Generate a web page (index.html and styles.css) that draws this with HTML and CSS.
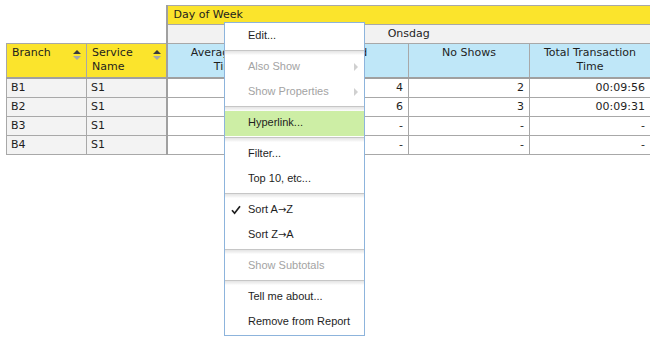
FILE: index.html
```html
<!DOCTYPE html>
<html lang="en">
<head>
<meta charset="UTF-8">
<title>Report grid</title>
<link rel="stylesheet" href="styles.css">
</head>
<body>
<div class="report">
  <table class="grid">
    <colgroup>
      <col class="c-dim"><col class="c-dim">
      <col class="c-val"><col class="c-val"><col class="c-val"><col class="c-val">
      <col class="c-more">
    </colgroup>
    <tr class="r-group">
      <th class="blank" colspan="2" rowspan="2"></th>
      <th class="group first" colspan="5">Day of Week</th>
    </tr>
    <tr class="r-day">
      <th class="day first" colspan="4">Onsdag</th>
      <th class="day"></th>
    </tr>
    <tr class="r-head">
      <th class="dim">Branch<span class="sort"></span></th>
      <th class="dim">Service Name<span class="sort"></span></th>
      <th class="measure first">Average Wait Time</th>
      <th class="measure">Served</th>
      <th class="measure">No Shows</th>
      <th class="measure">Total Transaction Time</th>
      <th class="measure"></th>
    </tr>
    <tr>
      <td class="key">B1</td><td class="key">S1</td>
      <td class="num first">00:01:12</td><td class="num">4</td><td class="num">2</td><td class="num">00:09:56</td><td class="num"></td>
    </tr>
    <tr>
      <td class="key">B2</td><td class="key">S1</td>
      <td class="num first">00:00:48</td><td class="num">6</td><td class="num">3</td><td class="num">00:09:31</td><td class="num"></td>
    </tr>
    <tr>
      <td class="key">B3</td><td class="key">S1</td>
      <td class="num first">-</td><td class="num">-</td><td class="num">-</td><td class="num">-</td><td class="num"></td>
    </tr>
    <tr>
      <td class="key">B4</td><td class="key">S1</td>
      <td class="num first">-</td><td class="num">-</td><td class="num">-</td><td class="num">-</td><td class="num"></td>
    </tr>
  </table>

  <!-- Menu de contexto do cabeçalho -->
  <div class="context-menu">
    <div class="menu-item">Edit...</div>
    <div class="menu-sep"></div>
    <div class="menu-item disabled has-sub">Also Show</div>
    <div class="menu-item disabled has-sub">Show Properties</div>
    <div class="menu-sep"></div>
    <div class="menu-item hover">Hyperlink...</div>
    <div class="menu-sep"></div>
    <div class="menu-item">Filter...</div>
    <div class="menu-item">Top 10, etc...</div>
    <div class="menu-sep"></div>
    <div class="menu-item checked">
      <svg class="check" width="10" height="10" viewBox="0 0 10 10"><path d="M1 5.2 L3.6 8.2 L9 1.2" fill="none" stroke="#1e1e1e" stroke-width="1.7"/></svg>
      Sort A<span class="arrow">→</span>Z
    </div>
    <div class="menu-item">Sort Z<span class="arrow">→</span>A</div>
    <div class="menu-sep"></div>
    <div class="menu-item disabled">Show Subtotals</div>
    <div class="menu-sep"></div>
    <div class="menu-item">Tell me about...</div>
    <div class="menu-item">Remove from Report</div>
  </div>
</div>
</body>
</html>
```

FILE: styles.css
```css
body {
    margin: 0;
    height: 341px;
    overflow: hidden;
    background: #ffffff;
    font-family: "DejaVu Sans", Verdana, sans-serif;
    font-size: 11px;
    color: #1e1e1e;
}

.report {
    position: relative;
    padding: 5px 0 0 6px;
}

/* Grade do relatório */
.grid {
    border-collapse: collapse;
    table-layout: fixed;
    width: 705px;
}

.c-dim { width: 80px; }
.c-val { width: 121px; }
.c-more { width: 61px; }

.grid th,
.grid td {
    border: 1px solid #a8a8a8;
    padding: 0 5px;
    height: 18px;
    font-weight: normal;
    white-space: nowrap;
    overflow: hidden;
    line-height: 14px;
}

.grid .first {
    border-left: 2px solid #a0a0a0;
}

.blank {
    border: none !important;
    background: #ffffff;
}

.group {
    background: #fbe42c;
    text-align: left;
    padding-left: 6px !important;
}

.day {
    background: #f2f2f2;
    text-align: center;
}

.r-head th {
    height: 31px;
    vertical-align: top;
    padding-top: 2px;
    border-bottom: 2px solid #a0a0a0;
    white-space: normal;
}

.dim {
    position: relative;
    background: #fbe42c;
    text-align: left;
    padding-right: 20px !important;
}

.measure {
    background: #bfe7f8;
    text-align: center;
    padding: 2px 12px 0 !important;
}

/* Setas de ordenação */
.sort {
    position: absolute;
    top: 6px;
    right: 5px;
    width: 8px;
    height: 10px;
}

.sort::before,
.sort::after {
    content: "";
    position: absolute;
    left: 0;
    border-left: 4px solid transparent;
    border-right: 4px solid transparent;
}

.sort::before {
    top: 0;
    border-bottom: 4px solid #3a3a3a;
}

.sort::after {
    top: 6px;
    border-top: 4px solid #a8a8a8;
}

.key {
    background: #f3f3f3;
    text-align: left;
    padding-left: 4px !important;
}

.num {
    background: #ffffff;
    text-align: right;
}

/* Menu de contexto */
.context-menu {
    position: absolute;
    left: 224px;
    top: 22px;
    width: 139px;
    padding-top: 1px;
    background: #ffffff;
    border: 1px solid #8db4dc;
    font-family: "Liberation Sans", Arial, sans-serif;
    font-size: 11px;
    color: #1e1e1e;
}

.menu-item {
    position: relative;
    height: 25px;
    line-height: 23px;
    padding-left: 23px;
    white-space: nowrap;
}

.menu-item.hover {
    background: #cdeea5;
}

.menu-item.disabled {
    color: #a3a3a3;
}

.arrow {
    font-family: "DejaVu Sans", sans-serif;
    font-size: 10px;
}

.has-sub::after {
    content: "";
    position: absolute;
    right: 6px;
    top: 8px;
    border-left: 4px solid #d0d0d0;
    border-top: 4px solid transparent;
    border-bottom: 4px solid transparent;
}

.check {
    position: absolute;
    left: 6px;
    top: 7px;
}

.menu-sep {
    height: 6px;
    background: linear-gradient(to bottom, #ffffff 0, #ffffff 1px, #c6c6c6 1px, #c6c6c6 2px, #e4e4e4 2px, #f6f6f6 5px, #ffffff 6px);
}
```
